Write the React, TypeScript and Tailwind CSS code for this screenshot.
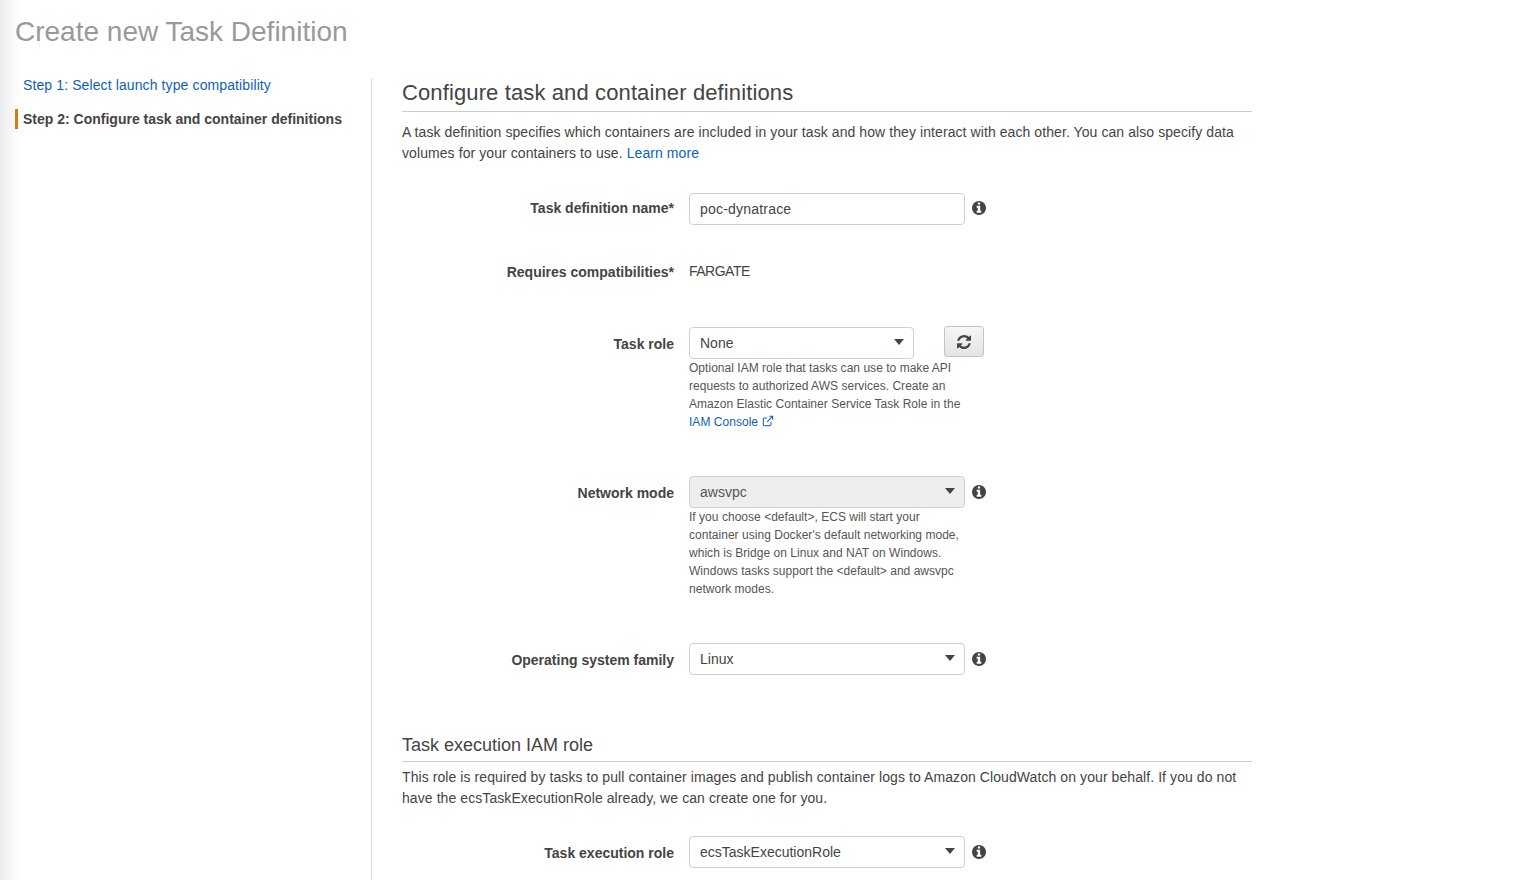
import type { ReactNode } from 'react'

// font awesome 4 glyphs, the ones in the newer packages have other shapes
function InfoIcon() {
  return (
    <svg viewBox="128 128 1536 1536" className="w-[14px] h-[14px] fill-[#444]">
      <path d="M1152 1376v-160q0-14-9-23t-23-9h-96v-512q0-14-9-23t-23-9h-320q-14 0-23 9t-9 23v160q0 14 9 23t23 9h96v320h-96q-14 0-23 9t-9 23v160q0 14 9 23t23 9h448q14 0 23-9t9-23zm-128-896v-160q0-14-9-23t-23-9h-192q-14 0-23 9t-9 23v160q0 14 9 23t23 9h192q14 0 23-9t9-23zm640 416q0 209-103 385.5t-279.5 279.5-385.5 103-385.5-103-279.5-279.5-103-385.5 103-385.5 279.5-279.5 385.5-103 385.5 103 279.5 279.5 103 385.5z" />
    </svg>
  )
}

function RefreshIcon() {
  return (
    <svg viewBox="128 128 1536 1536" className="w-[14px] h-[14px] fill-[#444]">
      <path d="M1639 1056q0 5-1 7-64 268-268 434.5t-478 166.5q-146 0-282.5-55t-243.5-157l-129 129q-19 19-45 19t-45-19-19-45v-448q0-26 19-45t45-19h448q26 0 45 19t19 45-19 45l-137 137q71 66 161 102t187 36q134 0 250-65t186-179q11-17 53-117 8-23 30-23h192q13 0 22.5 9.5t9.5 22.5zm25-800v448q0 26-19 45t-45 19h-448q-26 0-45-19t-19-45 19-45l138-138q-148-137-349-137-134 0-250 65t-186 179q-11 17-53 117-8 23-30 23h-199q-13 0-22.5-9.5t-9.5-22.5v-7q65-268 270-434.5t480-166.5q146 0 284 55.5t245 156.5l130-129q19-19 45-19t45 19 19 45z" />
    </svg>
  )
}

function Caret() {
  return <span className="w-0 h-0 -mt-[2px] border-x-[5.5px] border-x-transparent border-t-[6px] border-t-[#444]" />
}

function Select({ value, width, disabled }: { value: string; width: string; disabled?: boolean }) {
  return (
    <div
      className={`${width} h-8 flex items-center justify-between pl-[10px] pr-[9px] rounded-[4px] border border-[#d0d0d0] ${
        disabled ? 'bg-[#eee] text-[#555]' : 'bg-white text-[#444]'
      }`}
    >
      <span>{value}</span>
      <Caret />
    </div>
  )
}

function Row({
  label,
  className,
  labelClass,
  children,
}: {
  label: string
  className: string
  labelClass?: string
  children: ReactNode
}) {
  return (
    <div className={`flex ${className}`}>
      <div className={`w-[272px] text-right font-bold text-[#444] leading-5 ${labelClass ?? 'pt-[7px]'}`}>{label}</div>
      <div className="ml-[15px] flex-1 min-w-0">{children}</div>
    </div>
  )
}

function Help({ children }: { children: ReactNode }) {
  return <p className="text-xs leading-[18px] text-[#555] w-[276px] tracking-[0.03px]">{children}</p>
}

export default function App() {
  return (
    <div
      className="h-[880px] overflow-hidden bg-gradient-to-r from-[#ececec] to-white to-[20px] pl-[15px] text-sm text-[#444]"
      style={{ fontFamily: '"Liberation Sans", Arial, sans-serif' }}
    >
      <h1 className="text-[28px] leading-8 text-[#999] pt-4 h-[78px]">Create new Task Definition</h1>
      <div className="flex">
        <aside className="w-[357px] h-[802px] border-r border-[#ddd] shrink-0">
          <a className="block pl-2 leading-[14px] text-[#0f5fb8] mb-[17px] tracking-[0.11px]">Step 1: Select launch type compatibility</a>
          <div className="border-l-[3px] border-[#dd7a0f] pl-[5px] font-bold leading-5 text-[#444]">
            Step 2: Configure task and container definitions
          </div>
        </aside>
        <main className="ml-[30px] w-[850px]">
          <h2 className="text-[22px] leading-7 text-[#444] border-b border-[#ccc] h-[34px] pt-px tracking-[0.12px]">
            Configure task and container definitions
          </h2>
          <p className="mt-[10px] leading-[21px] text-[#444] tracking-[0.08px]">
            A task definition specifies which containers are included in your task and how they interact with each other. You can also specify data volumes for your containers to use.{' '}
            <a className="text-[#0f5fb8]">Learn more</a>
          </p>

          <Row label="Task definition name*" className="mt-[29px] h-[32px]" labelClass="pt-[5px]">
            <div className="flex items-center">
              <div className="w-[276px] h-8 flex items-center px-[10px] rounded-[4px] border border-[#d0d0d0] bg-white text-[#444] tracking-[0.2px]">poc-dynatrace</div>
              <span className="ml-[7px] -mt-[2px]"><InfoIcon /></span>
            </div>
          </Row>

          <Row label="Requires compatibilities*" className="mt-[30px] h-[40px]" labelClass="pt-[7px]">
            <div className="pt-[6px] leading-5 tracking-[-0.5px]">FARGATE</div>
          </Row>

          <Row label="Task role" className="mt-8">
            <div className="flex">
              <Select value="None" width="w-[225px]" />
              <button className="ml-[30px] w-10 h-[31px] -mt-[1px] flex items-center justify-center rounded-[3px] border border-[#c4c4c4] bg-gradient-to-b from-[#f6f6f6] to-[#e4e4e4]">
                <RefreshIcon />
              </button>
            </div>
            <Help>
              Optional IAM role that tasks can use to make API requests to authorized AWS services. Create an Amazon Elastic Container Service Task Role in the{' '}
              <a className="text-[#0f5fb8] whitespace-nowrap">
                IAM Console
                <svg viewBox="0 0 14 14" className="inline w-3 h-3 ml-1 -mt-[3px]" fill="none" stroke="currentColor" strokeWidth="1.2">
                  <path d="M10.5 8v3.2a1.3 1.3 0 0 1-1.3 1.3H2.8a1.3 1.3 0 0 1-1.3-1.3V4.8a1.3 1.3 0 0 1 1.3-1.3H6" />
                  <path d="M8.5 1.5h4v4M12.3 1.7 6 8" />
                </svg>
              </a>
            </Help>
          </Row>

          <Row label="Network mode" className="mt-[45px]">
            <div className="flex items-center">
              <Select value="awsvpc" width="w-[276px]" disabled />
              <span className="ml-[7px]"><InfoIcon /></span>
            </div>
            <Help>
              If you choose &lt;default&gt;, ECS will start your container using Docker's default networking mode, which is Bridge on Linux and NAT on Windows. Windows tasks support the &lt;default&gt; and awsvpc network modes.
            </Help>
          </Row>

          <Row label="Operating system family" className="mt-[45px]">
            <div className="flex items-center">
              <Select value="Linux" width="w-[276px]" />
              <span className="ml-[7px]"><InfoIcon /></span>
            </div>
          </Row>

          <h3 className="mt-[58px] text-lg leading-6 border-b border-[#ccc] h-[29px] text-[#444]">Task execution IAM role</h3>
          <p className="mt-[5px] leading-[21px] text-[#444] tracking-[0.08px]">
            This role is required by tasks to pull container images and publish container logs to Amazon CloudWatch on your behalf. If you do not have the ecsTaskExecutionRole already, we can create one for you.
          </p>

          <Row label="Task execution role" className="mt-[27px]">
            <div className="flex items-center">
              <Select value="ecsTaskExecutionRole" width="w-[276px]" />
              <span className="ml-[7px]"><InfoIcon /></span>
            </div>
          </Row>
        </main>
      </div>
    </div>
  )
}
